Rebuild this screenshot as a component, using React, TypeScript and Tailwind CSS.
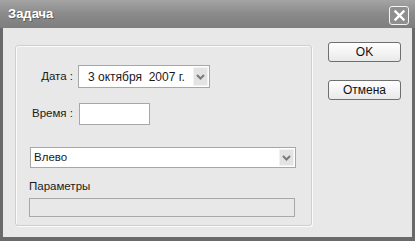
import React from "react";

function Chevron() {
  return (
    <svg width="9" height="6" viewBox="0 0 9 6">
      <path d="M1 1 L4.5 4.5 L8 1" fill="none" stroke="#7a7a7a" strokeWidth="2" />
    </svg>
  );
}

function Combo({ text, className }: { text: string; className: string }) {
  return (
    <div className={`flex items-center bg-white border border-[#a7a7a7] ${className}`}>
      <span className="flex-1 truncate whitespace-pre">{text}</span>
      <div className="flex items-center justify-center w-[15px] self-stretch my-[1px] mr-[1px] bg-[#e3e3e3] border border-[#f2f2f2]">
        <Chevron />
      </div>
    </div>
  );
}

function Btn({ label }: { label: string }) {
  return (
    <button className="w-[73px] h-[20px] rounded-[3px] border border-[#6f6f6f] bg-gradient-to-b from-white to-[#e9e9e9] text-[12px] leading-none text-[#111]">
      {label}
    </button>
  );
}

export default function App() {
  return (
    <div
      className="w-[415px] h-[241px] bg-[#6a6a6a] flex flex-col text-[11.5px] text-[#1a1a1a]"
      style={{ fontFamily: '"Liberation Sans", Arial, sans-serif' }}
    >
      {/* title bar */}
      <div className="h-[28px] flex items-center justify-between pl-[8px] pr-[6px] bg-gradient-to-b from-[#a4a4a4] via-[#8a8a8a] to-[#7e7e7e]">
        <span className="text-white font-bold text-[13px] [text-shadow:1px_1px_0_#5a5a5a]">Задача</span>
        <div className="w-[20px] h-[19px] mt-[3px] rounded-[3px] border border-[#f4f4f4] bg-[#8f8f8f] flex items-center justify-center">
          <svg width="13" height="13" viewBox="0 0 13 13">
            <path d="M2.5 2.5 L10.5 10.5 M10.5 2.5 L2.5 10.5" stroke="white" strokeWidth="2.4" strokeLinecap="square" />
          </svg>
        </div>
      </div>

      {/* client area */}
      <div className="flex-1 mx-[3px] mb-[4px] bg-[#e8e8e8] flex items-start pl-[12px] pt-[14px]">
        <div className="mt-[3px] w-[297px] h-[181px] rounded-[3px] border border-[#cfcfcf] shadow-[inset_1px_1px_0_#fafafa,1px_1px_0_#fafafa] flex flex-col">
          <div className="flex items-center mt-[19px]">
            <span className="w-[57px] text-right">Дата :</span>
            <Combo text="3 октября  2007 г." className="ml-[5px] w-[132px] h-[23px] pl-[9px] text-[12px]" />
          </div>
          <div className="flex items-center mt-[15px]">
            <span className="w-[57px] text-right">Время :</span>
            <div className="ml-[6px] w-[71px] h-[22px] bg-white border border-[#a7a7a7]" />
          </div>
          <Combo text="Влево" className="ml-[14px] mt-[22px] w-[266px] h-[21px] pl-[3px]" />
          <span className="ml-[13px] mt-[10px]">Параметры</span>
          <div className="ml-[13px] mt-[3px] w-[266px] h-[19px] border border-[#a9a9a9] bg-[#e8e8e8]" />
        </div>

        <div className="ml-[16px] flex flex-col gap-[18px]">
          <Btn label="OK" />
          <Btn label="Отмена" />
        </div>
      </div>
    </div>
  );
}
